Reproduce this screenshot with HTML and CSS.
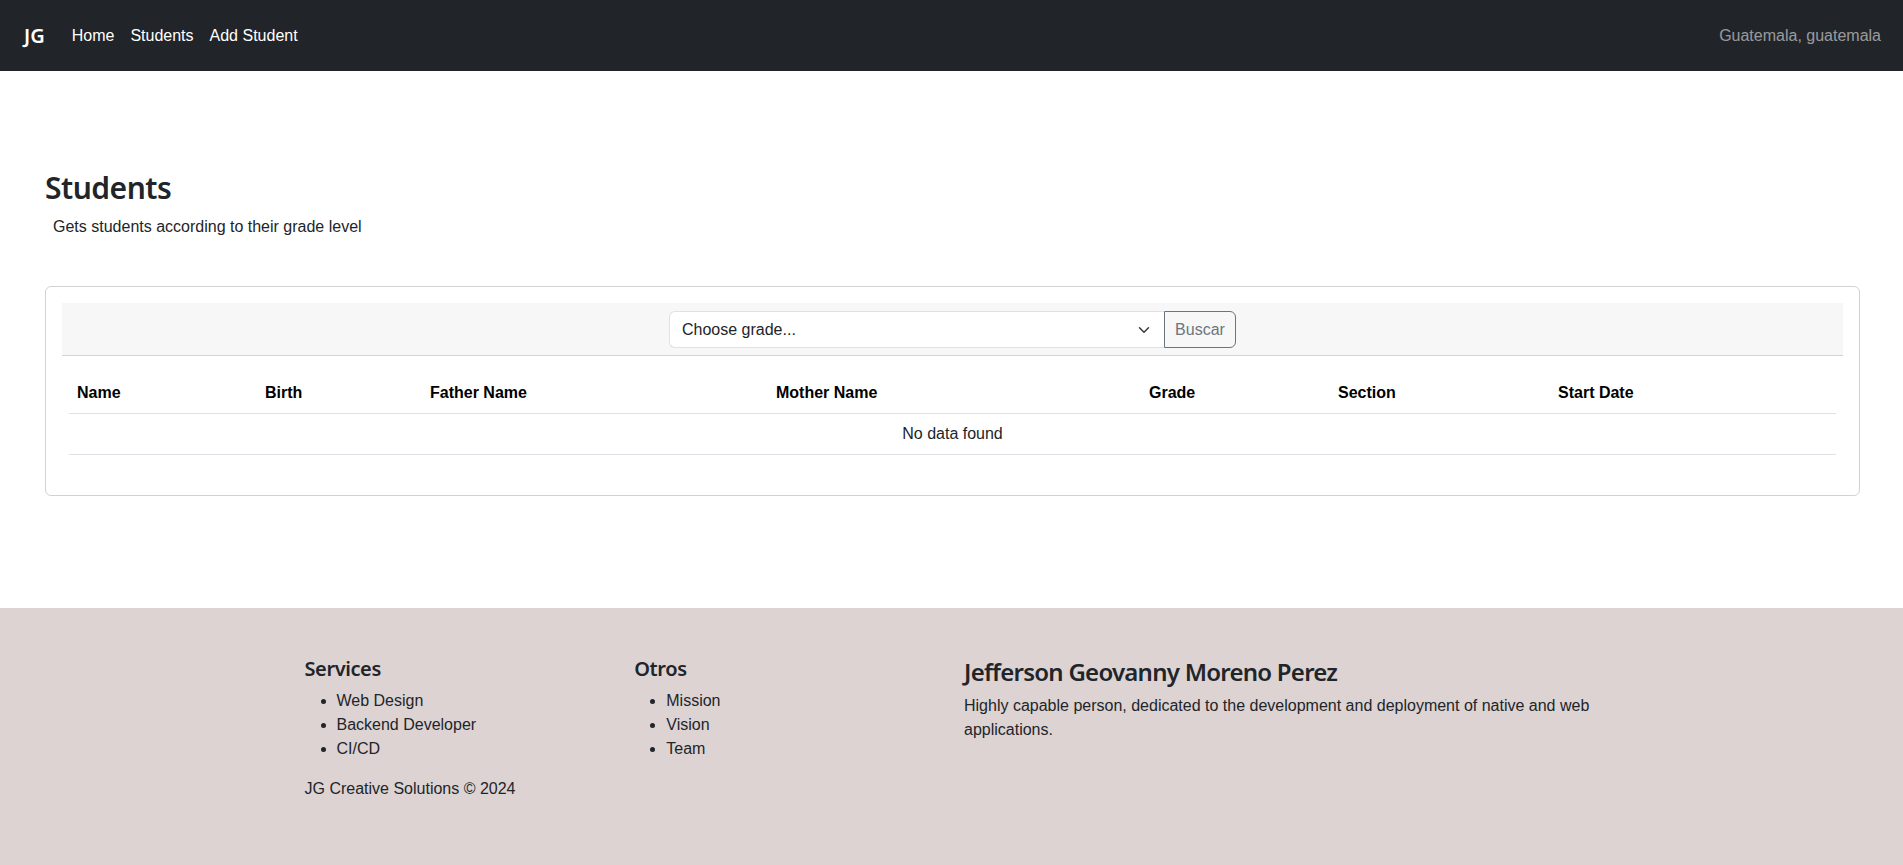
FILE: index.html
```html
<!DOCTYPE html>
<html lang="en">
<head>
<meta charset="utf-8">
<title>Students</title>
<link rel="stylesheet" href="styles.css">
</head>
<body>
<nav class="navbar">
  <div class="nav-left">
    <a class="brand" href="#">JG</a>
    <ul class="nav-links">
      <li><a href="#">Home</a></li>
      <li><a href="#">Students</a></li>
      <li><a href="#">Add Student</a></li>
    </ul>
  </div>
  <span class="location">Guatemala, guatemala</span>
</nav>

<main class="main">
  <h2 class="page-title">Students</h2>
  <p class="page-subtitle">Gets students according to their grade level</p>

  <section class="card">
    <div class="card-body">
      <div class="filter-bar">
        <div class="input-group">
          <div class="select">
            <span class="select-text">Choose grade...</span>
            <svg class="select-arrow" width="16" height="12" viewBox="0 0 16 16"><path d="M2 5l6 6 6-6" fill="none" stroke="#343a40" stroke-width="2" stroke-linecap="round" stroke-linejoin="round"/></svg>
          </div>
          <button class="btn-search" type="button">Buscar</button>
        </div>
      </div>
      <div class="table-wrap">
        <table class="table">
          <thead>
            <tr>
              <th class="c-name">Name</th>
              <th class="c-birth">Birth</th>
              <th class="c-father">Father Name</th>
              <th class="c-mother">Mother Name</th>
              <th class="c-grade">Grade</th>
              <th class="c-section">Section</th>
              <th class="c-start">Start Date</th>
            </tr>
          </thead>
          <tbody>
            <tr><td colspan="7" class="empty">No data found</td></tr>
          </tbody>
        </table>
      </div>
    </div>
  </section>
</main>

<footer class="footer">
  <div class="footer-container">
    <div class="col col-3">
      <h5 class="footer-title">Services</h5>
      <ul class="footer-list">
        <li>Web Design</li>
        <li>Backend Developer</li>
        <li>CI/CD</li>
      </ul>
      <p class="copyright">JG Creative Solutions © 2024</p>
    </div>
    <div class="col col-3">
      <h5 class="footer-title">Otros</h5>
      <ul class="footer-list">
        <li>Mission</li>
        <li>Vision</li>
        <li>Team</li>
      </ul>
    </div>
    <div class="col col-6">
      <h4 class="footer-name">Jefferson Geovanny Moreno Perez</h4>
      <p class="footer-desc">Highly capable person, dedicated to the development and deployment of native and web applications.</p>
    </div>
  </div>
</footer>
</body>
</html>
```

FILE: styles.css
```css
* { box-sizing: border-box; }
html, body { margin: 0; padding: 0; }
body {
  font-family: "Liberation Sans", Arial, sans-serif;
  font-size: 16px;
  line-height: 24px;
  color: #212529;
  background: #fff;
}
a { text-decoration: none; }

.navbar {
  height: 71px;
  background: #212529;
  display: flex;
  align-items: center;
  justify-content: space-between;
  padding: 0 22px 0 24px;
}
.nav-left { display: flex; align-items: center; }
.brand {
  color: #fff;
  font-family: "Noto Sans", "Liberation Sans", sans-serif;
  font-size: 20px;
  font-weight: 600;
  margin-right: 19px;
}
.nav-links { list-style: none; margin: 0; padding: 0; display: flex; }
.nav-links a {
  color: #fff;
  display: block;
  padding: 8px 8px;
}
.location { color: rgba(255,255,255,.55); }

.main { padding: 98px 43px 112px 45px; }
.page-title {
  margin: 0 0 8px;
  font-family: "Noto Sans", "Liberation Sans", sans-serif;
  font-size: 30px;
  line-height: 38px;
  font-weight: 600;
  letter-spacing: -0.5px;
}
.page-subtitle { margin: 0 0 47px; padding-left: 8px; }

.card {
  border: 1px solid rgba(0,0,0,.175);
  border-radius: 6px;
}
.card-body { padding: 16px; }
.filter-bar {
  background: #f7f7f7;
  border-bottom: 1px solid #d3d3d3;
  padding: 8px 0 7px;
  display: flex;
  justify-content: center;
}
.input-group { display: flex; width: 567px; }
.select {
  flex: 1;
  height: 37px;
  background: #fff;
  border: 1px solid #dee2e6;
  border-right: 0;
  border-radius: 6px 0 0 6px;
  display: flex;
  align-items: center;
  justify-content: space-between;
  padding: 0 12px;
}
.select-arrow { display: block; }
.btn-search {
  font: inherit;
  width: 72px;
  height: 37px;
  padding: 0;
  color: #6c757d;
  background: transparent;
  border: 1px solid #6c757d;
  border-radius: 0 6px 6px 0;
}

.table-wrap { padding: 17px 7px 8px 7px; }
.table {
  width: 100%;
  border-collapse: collapse;
  margin-bottom: 16px;
}
.table th, .table td {
  padding: 8px;
  text-align: left;
  border-bottom: 1px solid #dee2e6;
}
.table th { font-weight: 700; color: #000; }
.table td.empty { text-align: center; }
.c-name { width: 188px; }
.c-birth { width: 165px; }
.c-father { width: 346px; }
.c-mother { width: 373px; }
.c-grade { width: 189px; }
.c-section { width: 220px; }

.footer {
  background: #ddd3d3;
  padding: 49px 0 80px;
}
.footer-container {
  width: 1320px;
  margin: 0 auto;
  display: flex;
  padding-left: 1px;
}
.col { padding: 0 12px; }
.col-3 { width: 330px; }
.col-6 { width: 660px; }
.footer-title {
  margin: 0 0 8px;
  font-family: "Noto Sans", "Liberation Sans", sans-serif;
  font-size: 20px;
  line-height: 24px;
  font-weight: 600;
  letter-spacing: -0.4px;
}
.footer-list { margin: 0 0 16px; padding-left: 32px; }
.copyright { margin: 0; }
.footer-name {
  margin: 0 0 8px;
  font-family: "Noto Sans", "Liberation Sans", sans-serif;
  font-size: 24px;
  line-height: 29px;
  font-weight: 600;
  letter-spacing: -0.75px;
}
.footer-desc { margin: 0; }
```
